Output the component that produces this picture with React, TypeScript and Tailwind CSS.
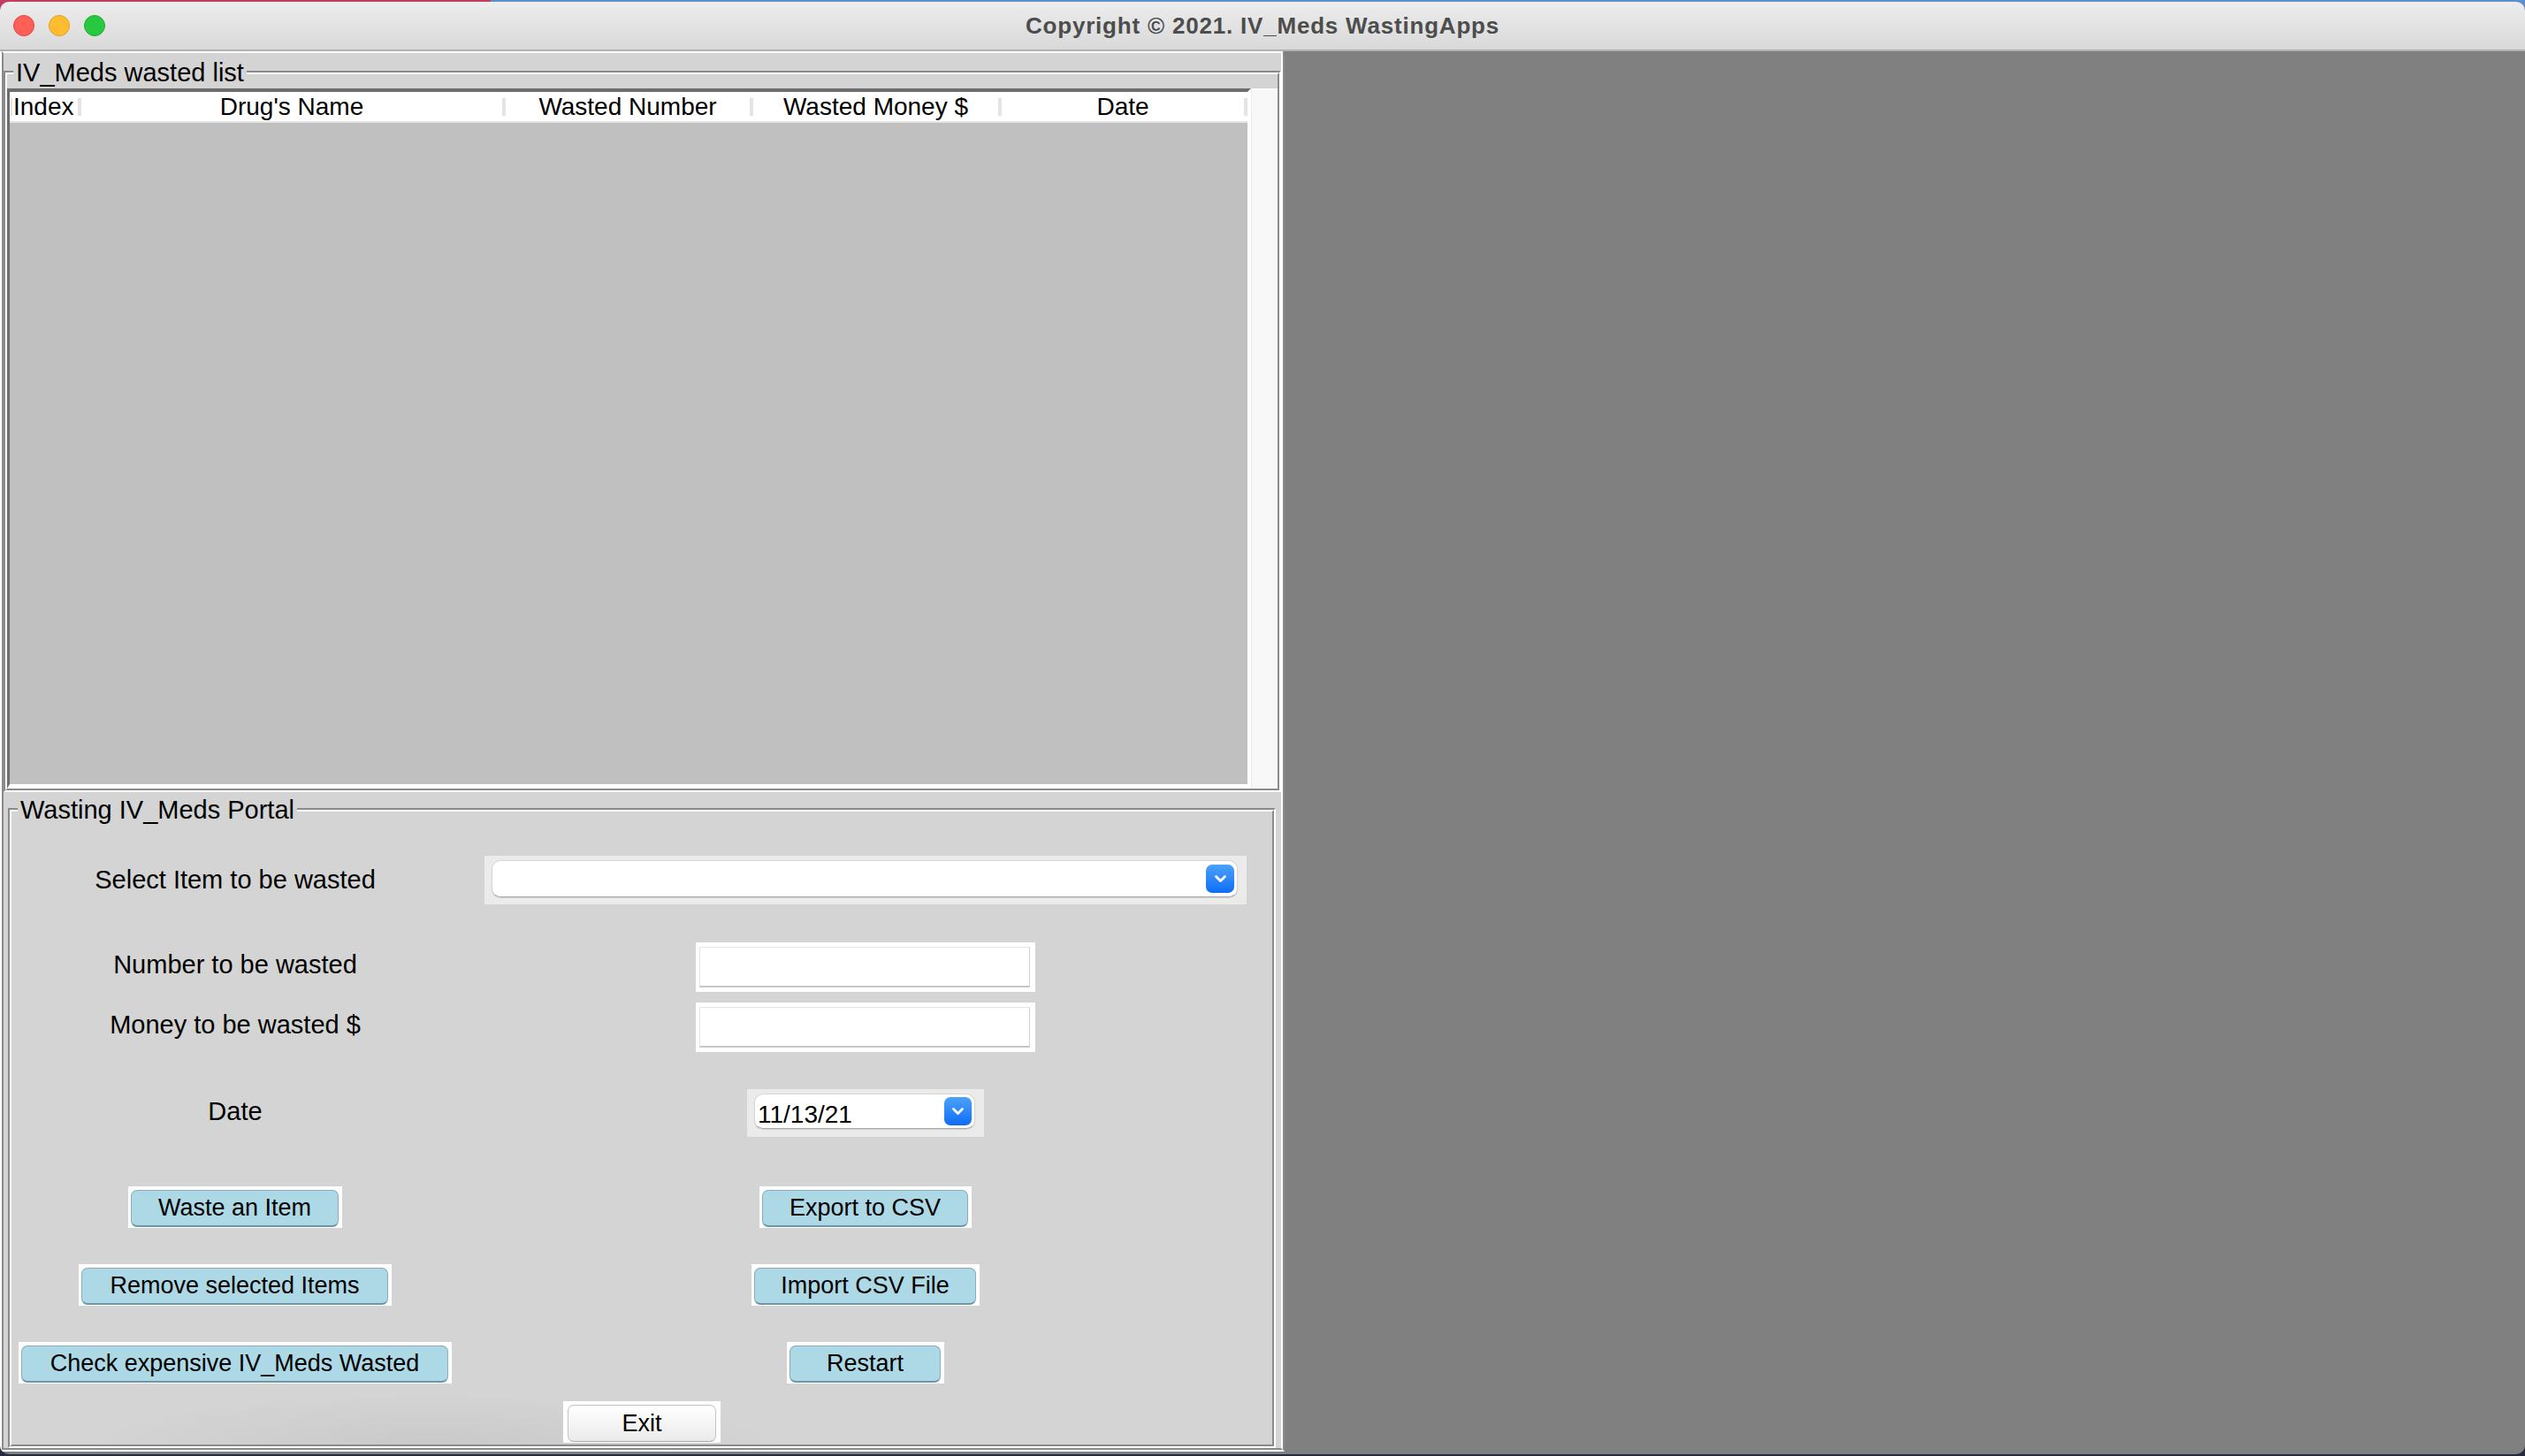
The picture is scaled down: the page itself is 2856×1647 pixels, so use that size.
import React from "react";

const FONT = "font-['Liberation_Sans',Arial,sans-serif]";

type Col = { label: string; w: string; left?: boolean };

const columns: Col[] = [
  { label: "Index", w: "w-[81px]", left: true },
  { label: "Drug's Name", w: "w-[480px]" },
  { label: "Wasted Number", w: "w-[280px]" },
  { label: "Wasted Money $", w: "w-[281px]" },
  { label: "Date", w: "w-[278px]" },
];

// Tk LabelFrame with a "groove" border and the title sitting on the top line
function GroupBox({
  title,
  className = "",
  children,
}: {
  title: string;
  className?: string;
  children?: React.ReactNode;
}) {
  return (
    <div
      className={`flex flex-col border-2 border-t-[#8a8a8a] border-l-[#8a8a8a] border-r-white border-b-white ${className}`}
    >
      <div className="flex flex-1 flex-col border-2 border-t-white border-l-white border-r-[#8a8a8a] border-b-[#8a8a8a]">
        <span className="-mt-[16px] ml-[7px] w-fit bg-[#d4d4d4] px-[3px] text-[29px] leading-none text-black">
          {title}
        </span>
        {children}
      </div>
    </div>
  );
}

function Chevron({ className = "" }: { className?: string }) {
  return (
    <div
      className={`flex shrink-0 items-center justify-center rounded-[7px] bg-linear-to-b from-[#4ba1fc] to-[#0a6df5] ${className}`}
    >
      <svg width="15" height="10" viewBox="0 0 15 10">
        <path
          d="M2.5 2.5L7.5 7.5L12.5 2.5"
          fill="none"
          stroke="white"
          strokeWidth="2.8"
          strokeLinecap="round"
          strokeLinejoin="round"
        />
      </svg>
    </div>
  );
}

function Entry() {
  return (
    <div className="h-[56px] w-[384px] bg-white pb-[5px] pl-[4px] pr-[6px] pt-[5px]">
      <div className="h-full border border-[#e4e4e4] border-b-2 border-b-[#c6c6c6] border-r-[#d2d2d2]" />
    </div>
  );
}

function TkButton({ label, w }: { label: string; w: string }) {
  return (
    <div className={`h-[47px] ${w} bg-white pb-[1px] pl-[3px] pr-[4px] pt-[4px]`}>
      <div className="flex h-full items-center justify-center rounded-[7px] border border-[#88aebc] border-b-2 border-b-[#6f96a5] bg-[#add8e6] text-[27px] leading-none text-black">
        {label}
      </div>
    </div>
  );
}

function Label({ children, className = "" }: { children: React.ReactNode; className?: string }) {
  return <span className={`text-[29px] leading-none text-black ${className}`}>{children}</span>;
}

export default function App() {
  return (
    <div
      className={`h-[1647px] w-[2856px] overflow-hidden bg-[linear-gradient(to_bottom,transparent_0,transparent_40px,#272a3f_40px),linear-gradient(to_right,#c43d60_0,#c43d60_555px,#5b8fd0_555px)] ${FONT}`}
    >
      <div className="mt-[2px] flex h-[1643px] flex-col overflow-hidden rounded-[10px] bg-[#808080]">
        {/* Title bar */}
        <div className="grid h-[56px] shrink-0 grid-cols-[1fr_auto_1fr] items-center border-b-2 border-b-[#b1b1b1] bg-linear-to-b from-[#ededed] to-[#d9d9d9]">
          <div className="flex items-center gap-[16px] pl-[15px]">
            <span className="h-[24px] w-[24px] rounded-full border border-[#e2463f] bg-[#fe5f57]" />
            <span className="h-[24px] w-[24px] rounded-full border border-[#dfa023] bg-[#febc2e]" />
            <span className="h-[24px] w-[24px] rounded-full border border-[#1dad2b] bg-[#28c840]" />
          </div>
          <span className="text-[26px] font-bold tracking-[0.8px] text-[#4d4d4d]">
            Copyright © 2021. IV_Meds WastingApps
          </span>
          <div />
        </div>

        {/* Body */}
        <div className="flex flex-1">
          <div className="flex h-[1584px] w-[1453px] flex-col border-b-2 border-l-2 border-r-2 border-b-white border-l-white border-r-[#8a8a8a]">
            <div className="flex flex-1 flex-col border-2 border-t-white border-l-[#8a8a8a] border-r-white border-b-[#8a8a8a] bg-[#d4d4d4]">
              {/* Wasted list */}
              <GroupBox title="IV_Meds wasted list" className="mt-[20px] h-[816px]">
                <div className="mt-[3px] flex flex-1">
                  <div className="flex flex-1 flex-col border-b-[5px] border-l-[3px] border-r-4 border-t-4 border-b-white border-l-[#6d6d6d] border-r-white border-t-[#6d6d6d]">
                    <div className="flex h-[35px] items-center border-b-2 border-b-[#e3e3e3] bg-white text-[28px] leading-none text-black">
                      {columns.map((c) => (
                        <div key={c.label} className={`flex h-full items-center ${c.w}`}>
                          {c.left && <span className="ml-[1px] h-[20px] w-[2px] bg-[#e4e4e4]" />}
                          <span className={c.left ? "ml-[1px] flex-1" : "flex-1 text-center"}>{c.label}</span>
                          <span className="h-[20px] w-[4px] bg-[#e4e4e4]" />
                        </div>
                      ))}
                    </div>
                    <div className="flex-1 bg-[#c0c0c0]" />
                  </div>
                  <div className="w-[30px] border-l border-l-[#ebebeb] bg-[#f8f8f8]" />
                </div>
              </GroupBox>

              {/* Portal */}
              <GroupBox
                title="Wasting IV_Meds Portal"
                className="ml-[5px] mr-[6px] mt-[18px] flex-1 bg-[radial-gradient(ellipse_400px_60px_at_480px_100%,rgba(0,0,0,0.05),transparent)]"
              >
                <div className="mt-[37px] grid h-[55px] grid-cols-[506px_1fr] items-center justify-items-center">
                  <Label>Select Item to be wasted</Label>
                  <div className="flex h-[55px] w-[862px] bg-[#ebebeb] pl-[8px] pr-[10px] pt-[5px]">
                    <div className="flex h-[42px] flex-1 items-center justify-end rounded-[10px] border border-[#d6d6d6] border-b-[#a9a9a9] bg-white pr-[3px] shadow-[0_1px_1px_rgba(0,0,0,0.12)]">
                      <Chevron className="h-[32px] w-[32px]" />
                    </div>
                  </div>
                </div>

                <div className="mt-[43px] grid h-[56px] grid-cols-[506px_1fr] items-center justify-items-center">
                  <Label className="-mt-[6px]">Number to be wasted</Label>
                  <Entry />
                </div>

                <div className="mt-[12px] grid h-[56px] grid-cols-[506px_1fr] items-center justify-items-center">
                  <Label className="-mt-[6px]">Money to be wasted $</Label>
                  <Entry />
                </div>

                <div className="mt-[42px] grid h-[54px] grid-cols-[506px_1fr] items-center justify-items-center">
                  <Label className="-mt-[4px]">Date</Label>
                  <div className="flex h-[54px] w-[268px] bg-[#ebebeb] pl-[8px] pr-[10px] pt-[5px]">
                    <div className="flex h-[40px] flex-1 items-center rounded-[10px] border border-[#d6d6d6] border-b-[#a9a9a9] bg-white pl-[3px] pr-[3px] shadow-[0_1px_1px_rgba(0,0,0,0.12)]">
                      <span className="flex-1 pt-[8px] text-[28px] leading-none text-black">11/13/21</span>
                      <Chevron className="h-[32px] w-[31px]" />
                    </div>
                  </div>
                </div>

                <div className="mt-[56px] grid h-[47px] grid-cols-[506px_1fr] items-center justify-items-center">
                  <TkButton label="Waste an Item" w="w-[242px]" />
                  <TkButton label="Export to CSV" w="w-[240px]" />
                </div>

                <div className="mt-[41px] grid h-[47px] grid-cols-[506px_1fr] items-center justify-items-center">
                  <TkButton label="Remove selected Items" w="w-[354px]" />
                  <TkButton label="Import CSV File" w="w-[258px]" />
                </div>

                <div className="mt-[41px] grid h-[47px] grid-cols-[506px_1fr] items-center justify-items-center">
                  <TkButton label="Check expensive IV_Meds Wasted" w="w-[490px]" />
                  <TkButton label="Restart" w="w-[178px]" />
                </div>

                <div className="mt-[20px] flex h-[47px] justify-center">
                  <div className="h-[47px] w-[178px] bg-white pb-[1px] pl-[5px] pr-[5px] pt-[4px]">
                    <div className="flex h-full items-center justify-center rounded-[7px] border border-[#c4c4c4] border-b-[#a8a8a8] bg-linear-to-b from-white to-[#ebebeb] text-[27px] leading-none text-black">
                      Exit
                    </div>
                  </div>
                </div>
              </GroupBox>
            </div>
          </div>
        </div>
      </div>
    </div>
  );
}
